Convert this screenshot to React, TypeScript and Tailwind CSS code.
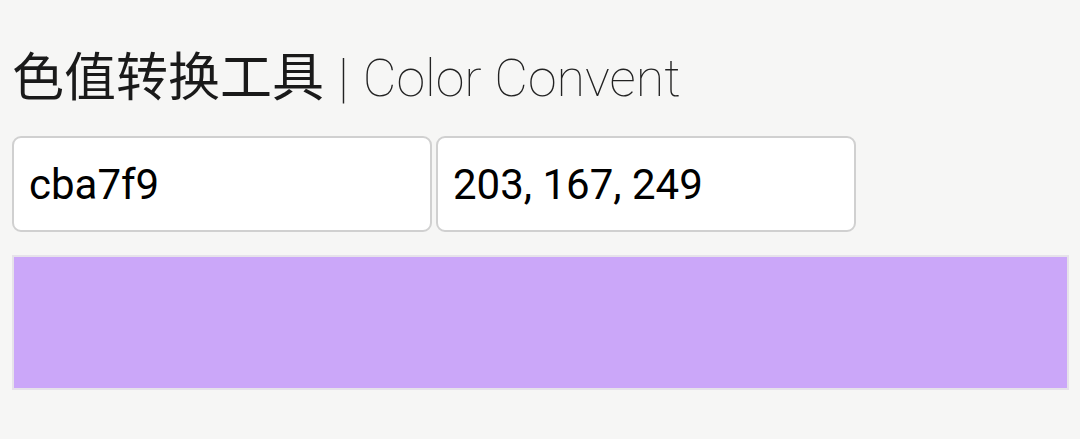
import React, { useState } from "react";

const hexToRgb = (hex: string): string => {
    const h = hex.replace("#", "");
    if (h.length !== 6) return "";
    const r = parseInt(h.slice(0, 2), 16);
    const g = parseInt(h.slice(2, 4), 16);
    const b = parseInt(h.slice(4, 6), 16);
    return `${r}, ${g}, ${b}`;
};

const App: React.FC = () => {
    const [hex, setHex] = useState<string>("cba7f9");
    const [rgb, setRgb] = useState<string>("203, 167, 249");

    const handleHex = (e: React.ChangeEvent<HTMLInputElement>) => {
        setHex(e.target.value);
        const next = hexToRgb(e.target.value);
        if (next) setRgb(next);
    };

    return (
        <div className="min-h-screen bg-[#f6f6f5] pl-[12px] pr-[11px] pt-[40px] font-['Roboto','Noto_Sans_CJK_SC',sans-serif]">
            <h1 className="flex items-baseline h-[68px] text-[52px] leading-[68px] text-[#1a1a1a]">
                <span className="font-['Noto_Sans_CJK_SC',sans-serif] font-normal">色值转换工具</span>
                <span className="ml-[14px] font-thin text-[#222] text-[54px]">|</span>
                <span className="ml-[14px] font-thin text-[#222]">Color Convent</span>
            </h1>
            <div className="flex gap-[4px] mt-[28px]">
                <input
                    className="w-[420px] h-[96px] bg-white border-2 border-[#d0d0d0] rounded-[9px] pl-[15px] text-[42px] text-black outline-none"
                    value={hex}
                    onChange={handleHex}
                />
                <input
                    className="w-[420px] h-[96px] bg-white border-2 border-[#d0d0d0] rounded-[9px] pl-[15px] text-[42px] text-black outline-none"
                    value={rgb}
                    onChange={(e) => setRgb(e.target.value)}
                />
            </div>
            <div
                className="mt-[23px] h-[135px] border-2 border-[#e6e2ea]"
                style={{ backgroundColor: `#${hex.length === 6 ? hex : "cba7f9"}` }}
            />
        </div>
    );
};

export default App;
